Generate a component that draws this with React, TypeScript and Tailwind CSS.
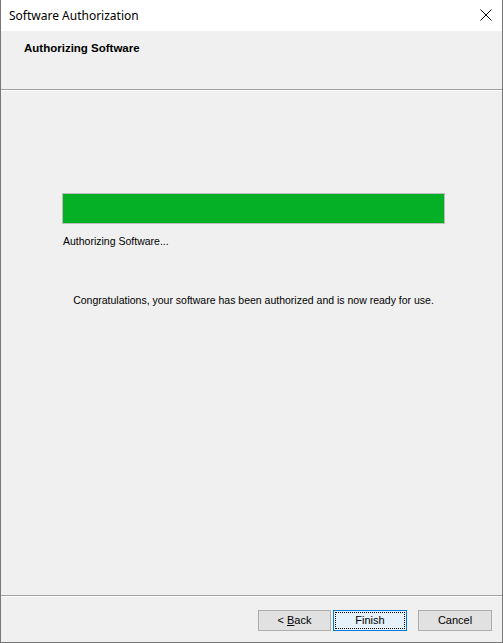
import React from "react";

export default function App() {
  const font = { fontFamily: '"Liberation Sans", Arial, sans-serif' };
  return (
    <div className="w-[503px] h-[643px] flex flex-col bg-[#f0f0f0] border-x border-b border-[#777777] text-black text-[10.5px]" style={font}>
      {/* title bar */}
      <div className="h-[31px] shrink-0 bg-white flex items-center justify-between pl-[8px] pr-[8px]">
        <span className="text-[12px] text-black" style={{ fontFamily: '"Noto Sans", "Open Sans", sans-serif' }}>Software Authorization</span>
        <svg width="12" height="12" viewBox="0 0 12 12" className="mr-[2px] mb-[1px]">
          <path d="M0.5 0.5 L11.5 11.5 M11.5 0.5 L0.5 11.5" stroke="#000" strokeWidth="1" fill="none" />
        </svg>
      </div>
      {/* header */}
      <div className="h-[58px] shrink-0 pl-[23px] pt-[9px]">
        <span className="font-bold text-[11.5px]">Authorizing Software</span>
      </div>
      <div className="h-px bg-[#a0a0a0] shrink-0" />
      <div className="h-px bg-white shrink-0" />
      {/* content */}
      <div className="flex-1 flex flex-col pl-[61px] pt-[102px]">
        <div className="w-[383px] h-[31px] border border-[#bcbcbc] bg-[#e6e6e6] p-0">
          <div className="h-full w-full bg-[#06b025]" />
        </div>
        <div className="mt-[10px] pl-[1px]">Authorizing Software...</div>
        <div className="mt-[43px] w-[383px] text-center">Congratulations, your software has been authorized and is now ready for use.</div>
      </div>
      <div className="h-px bg-[#a0a0a0] shrink-0" />
      <div className="h-px bg-white shrink-0" />
      {/* buttons */}
      <div className="h-[45px] shrink-0 flex items-start justify-end pt-[13px] pr-[10px]">
        <button className="w-[73px] h-[21px] bg-[#e1e1e1] border border-[#adadad] text-[11px] leading-none">
          &lt; <span className="underline">B</span>ack
        </button>
        <button className="ml-[2px] w-[74px] h-[21px] bg-[#e5f1fb] border border-[#0078d7] p-[1px]">
          <div className="w-full h-full border border-dotted border-black flex items-center justify-center text-[11px] leading-none">Finish</div>
        </button>
        <button className="ml-[11px] w-[74px] h-[21px] bg-[#e1e1e1] border border-[#adadad] text-[11px] leading-none">Cancel</button>
      </div>
    </div>
  );
}
